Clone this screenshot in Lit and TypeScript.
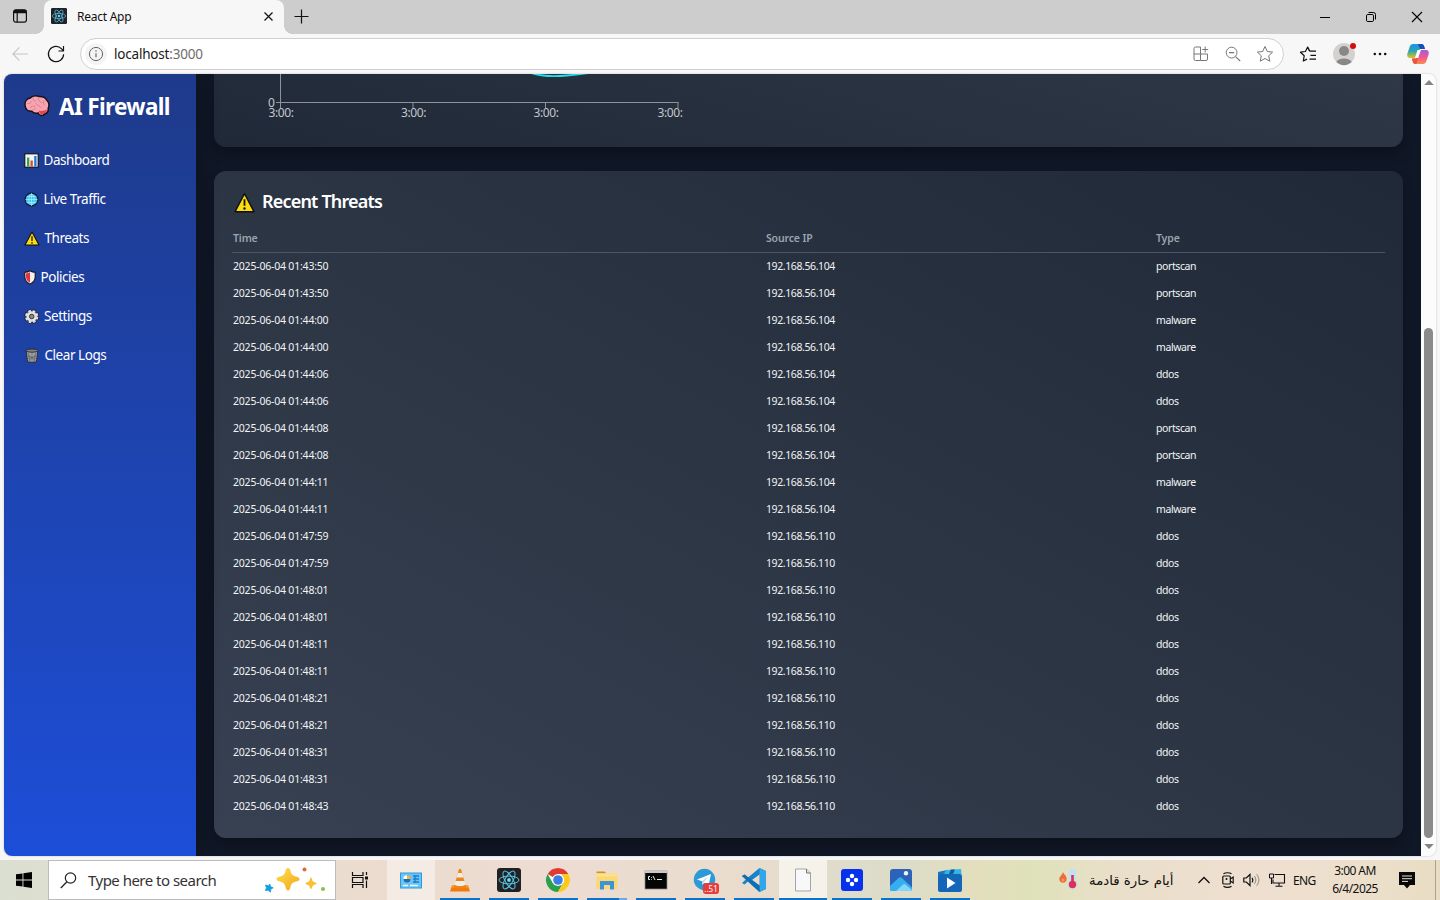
import { LitElement, html, svg, css, nothing } from "lit";
import { customElement } from "lit/decorators.js";

const base = css`
  :host { display: block; box-sizing: border-box; font-family: "Noto Sans", "Open Sans", sans-serif; }
  *, *::before, *::after { box-sizing: border-box; }
  svg { display: block; flex: none; overflow: visible; }
`;

const icon = (w: number, h: number, body: unknown, vb = `0 0 ${w} ${h}`) =>
  html`<svg width=${w} height=${h} viewBox=${vb} fill="none">${body}</svg>`;

const atom = (bg: string, r: number) => svg`
  <rect width="24" height="24" rx=${r} fill=${bg}/>
  <g stroke="#61dafb" stroke-width="1" opacity=".9">
    <ellipse cx="12" cy="12" rx="10" ry="3.9"/>
    <ellipse cx="12" cy="12" rx="10" ry="3.9" transform="rotate(60 12 12)"/>
    <ellipse cx="12" cy="12" rx="10" ry="3.9" transform="rotate(120 12 12)"/>
  </g><circle cx="12" cy="12" r="1.9" fill="#61dafb"/>`;

/* ---------- window chrome ---------- */

@customElement("browser-tabs")
class BrowserTabs extends LitElement {
  static styles = [base, css`
    :host { height: 34px; background: #cdcdcd; }
    .bar { display: flex; height: 34px; align-items: center; }
    .actions { width: 44px; padding: 0 0 2px 12px; }
    .tab { position: relative; width: 240px; height: 34px; background: #f7f7f7; border-radius: 8px 8px 0 0; display: flex; align-items: center; padding: 0 10px 2px 7px; }
    .tab::before, .tab::after { content: ""; position: absolute; bottom: 0; width: 8px; height: 8px; }
    .tab::before { left: -8px; background: radial-gradient(circle at 0 0, transparent 7.5px, #f7f7f7 8px); }
    .tab::after { right: -8px; background: radial-gradient(circle at 100% 0, transparent 7.5px, #f7f7f7 8px); }
    .title { flex: 1; margin: 0 0 0 10px; font-size: 12px; letter-spacing: -0.25px; color: #111; }
    .plus { margin-left: 10px; margin-bottom: 2px; flex: 1; }
    .ctl { width: 46px; display: flex; justify-content: center; }
  `];
  render() {
    return html`<div class="bar">
      <div class="actions">${icon(16, 16, svg`<rect x="1.6" y="1.8" width="12.8" height="12.4" rx="2.2" stroke="#111" stroke-width="1.2"/><path d="M1.6 5.2V4a2.2 2.2 0 0 1 2.2-2.2h8.4A2.2 2.2 0 0 1 14.4 4v1.2z" fill="#111"/><path d="M5.2 5v9" stroke="#111" stroke-width="1.2"/>`)}</div>
      <div class="tab">${icon(16, 16, atom("#20232a", 2), "0 0 24 24")}
        <span class="title">React App</span>
        ${icon(11, 11, svg`<path d="M1.5 1.5l8 8M9.500 1.5l-8 8" stroke="#111" stroke-width="1.2"/>`)}</div>
      <div class="plus">${icon(15, 15, svg`<path d="M7.500 .5v14M.5 7.500h14" stroke="#111" stroke-width="1.2"/>`)}</div>
      <div class="ctl">${icon(10, 10, svg`<path d="M0 5.5h10" stroke="#000"/>`)}</div>
      <div class="ctl">${icon(10, 10, svg`<rect x=".5" y="2.500" width="7" height="7" rx="1.3" stroke="#000"/><path d="M2.500 .5H7.500a2 2 0 0 1 2 2v5" stroke="#000"/>`)}</div>
      <div class="ctl">${icon(10, 10, svg`<path d="M0 0l10 10M10 0L0 10" stroke="#000" stroke-width="1.1"/>`)}</div>
    </div>`;
  }
}

@customElement("browser-toolbar")
class BrowserToolbar extends LitElement {
  static styles = [base, css`
    :host { height: 40px; background: #f7f7f7; }
    .bar { display: flex; height: 40px; align-items: center; }
    .back { width: 36px; padding-left: 12px; }
    .reload { width: 44px; padding-left: 11px; }
    .address { width: 1204px; height: 32px; border: 1px solid #d0d0d0; border-radius: 16px; background: #fff; display: flex; align-items: center; padding: 0 9px 0 4px; }
    .info { width: 22px; height: 22px; border-radius: 50%; background: #f4f4f4; display: grid; place-items: center; }
    .url { flex: 1; margin-left: 7px; font-size: 13.5px; letter-spacing: -0.2px; color: #1a1a1a; }
    .port { color: #6d6d6d; }
    .tools { display: flex; gap: 14px; }
    .side { flex: 1; display: flex; align-items: center; padding-left: 15px; }
    .menu { margin-left: 17px; }
    .avatar { margin-left: 15px; }
    .copilot { margin-left: 20px; }
  `];
  render() {
    return html`<div class="bar">
      <div class="back">${icon(16, 16, svg`<path d="M16 8H1M7.500 1.300L.9 8l6.600 6.700" stroke="#c6c6c6" stroke-width="1.2"/>`)}</div>
      <div class="reload">${icon(18, 18, svg`<path d="M16.600 9.200A7.600 7.600 0 1 1 14.600 3.900L16.400 5.700M16.500 1v5h-5" stroke="#151515" stroke-width="1.2"/>`)}</div>
      <div class="address">
        <div class="info">${icon(16, 16, svg`<circle cx="8" cy="8" r="6.600" stroke="#666"/><path d="M8 7.200v4" stroke="#666" stroke-width="1.2"/><circle cx="8" cy="5" r=".8" fill="#666"/>`)}</div>
        <span class="url">localhost<span class="port">:3000</span></span>
        <div class="tools">
          ${icon(18, 18, svg`<path d="M8.500 15.500H3.500a1.500 1.500 0 0 1-1.500-1.500V3.500A1.500 1.500 0 0 1 3.500 2H8.500v13.500M2 9h13.500v5a1.500 1.500 0 0 1-1.500 1.500H8.500M13.200 1.500v6M10.200 4.500h6" stroke="#777"/>`)}
          ${icon(18, 18, svg`<circle cx="7.600" cy="7.600" r="5.400" stroke="#777"/><path d="M5 7.600h5.200M11.600 11.600l4.600 4.400" stroke="#777" stroke-width="1.1"/>`)}
          ${icon(18, 18, svg`<path d="M9 1.500l2.300 5 5.300.6-3.900 3.700 1.100 5.400L9 13.500l-4.800 2.700 1.100-5.400L1.400 7.100l5.300-.6z" stroke="#777" stroke-linejoin="round"/>`)}
        </div>
      </div>
      <div class="side">
        ${icon(18, 18, svg`<path d="M10.300 5.700L8.700 2 6.400 6.500 1.500 7.200l3.700 3.600-.9 5.200L8 14.100M8.700 2l2.200 4.200h6.100M11.500 10.300H17M10.500 14.200H17" stroke="#111" stroke-width="1.2" stroke-linejoin="round"/>`)}
        <div class="avatar">${icon(24, 24, svg`<circle cx="12" cy="12" r="11" fill="#d4d2d0"/><circle cx="12" cy="9" r="5" fill="#8a8886"/><path d="M4.300 20a8.200 5.500 0 0 1 15.400 0A11 11 0 0 1 4.300 20z" fill="#8a8886"/><circle cx="21" cy="4" r="3" fill="#d40d12"/>`)}</div>
        <div class="menu">${icon(14, 4, svg`<circle cx="1.800" cy="2" r="1.300" fill="#111"/><circle cx="7" cy="2" r="1.300" fill="#111"/><circle cx="12.200" cy="2" r="1.300" fill="#111"/>`)}</div>
        <div class="copilot">${icon(22, 22, svg`
          <defs>
            <linearGradient id="ca" x1="0" y1="0" x2="0" y2="1"><stop offset="0" stop-color="#1c93e8"/><stop offset=".5" stop-color="#2aa6b0"/><stop offset="1" stop-color="#e2c51c"/></linearGradient>
            <linearGradient id="cb" x1="0" y1="0" x2="0" y2="1"><stop offset="0" stop-color="#a45be6"/><stop offset=".5" stop-color="#f0588c"/><stop offset="1" stop-color="#fb8a50"/></linearGradient>
          </defs>
          <path d="M6 1h8.500c1.600 0 2.300 1.200 2.700 2.600L18 6h-5L9 15H3.500C.6 15-.3 13 .4 10.500L2.800 3.400C3.300 2 4.400 1 6 1z" fill="url(#ca)"/>
          <path d="M11 1h3.500c1.600 0 2.300 1.200 2.700 2.600L18 6h-5z" fill="#164fb8"/>
          <path d="M16 21H8.500c-2 0-2.600-1.600-2.900-3L5 15.500h4L13 7h5.500c2.900 0 3.800 2 3.100 4.500l-2.400 7.100C18.700 20 17.600 21 16 21z" fill="url(#cb)"/>
          <path d="M5 15.500h4l2.200-4-1.200 7.500c-.3 1.300-.8 2-1.500 2-2 0-2.600-1.600-2.900-3z" fill="#e8553a"/>
          <path d="M10.500 7h3.400l-2.700 8H7.900z" fill="#fff"/>`)}</div>
      </div>
    </div>`;
  }
}

/* ---------- page icons ---------- */

const warning = (s: number) => icon(s, s, svg`<path d="M8 1.200L15.200 15H.8z" fill="#fcdc10" stroke="#111" stroke-width="1.1" stroke-linejoin="round"/><path d="M8 5.500v5" stroke="#111" stroke-width="1.400"/><circle cx="8" cy="12.600" r=".9" fill="#111"/>`, "0 0 16 16");

const brain = icon(26, 22, svg`
  <path d="M1 10C.7 5.800 3.700 3.500 6.200 3 8.500.5 12.500.4 15 1.400c3.600-.2 6.700 1.300 7.800 3.900 2.200 2 2.600 5.300 1.500 7.700.3 3-1.400 5.400-3.700 6-2 2.400-5.300 2.100-6.500-1.100-3 .6-5.200.1-6.300-1.700C3.700 16.500 1.300 14 1 10z" fill="#f8a3b0" stroke="#15131c" stroke-width="1.500"/>
  <path d="M14.500 15.500c3 1 6.500.5 8.300-1.200.2 2-1 3.700-2.600 4-1.800 2-4.400 1.500-5.700-2.800z" fill="#e8434f"/>
  <path d="M4 8.500c2 .5 3-.5 3-2M9 3.500c0 2 1.500 3 3 2.500M14.500 3c0 3 1 4 3 4.300M20 6c-1 1-1 3 .3 4M6 13c1-2 3.500-2.500 5-1.500M12 8.500c1.500 3 4 2 5 4M9 14.800c1 0 2-.5 2.500-1.500" stroke="#d98090" stroke-width="1" stroke-linecap="round"/>`);

const navIcons: Record<string, unknown> = {
  Dashboard: icon(15, 15, svg`<rect x=".8" y=".8" width="13.400" height="13.400" fill="#f4f4f4" stroke="#111" stroke-width="1.100"/><path d="M3 4.500h2.300v9H3z" fill="#2ba84a"/><path d="M6.500 7.500h2.300v6H6.500z" fill="#e5472f"/><path d="M10.200 3h2.300v10.500h-2.300z" fill="#1f7ad6"/>`),
  "Live Traffic": icon(15, 15, svg`<circle cx="7.500" cy="7.500" r="6.400" fill="#35c5ee" stroke="#0d1c33" stroke-width="1.200"/><path d="M7.500 1.500v12M1.500 7.500h12M2.700 4.500h9.600M2.700 10.500h9.600M7.500 1.500C4 4 4 11 7.500 13.500M7.500 1.500C11 4 11 11 7.500 13.500" stroke="#c4f1ff" stroke-width=".6"/>`),
  Threats: icon(16, 15, svg`<path d="M8 1L15 14H1z" fill="#fcdc10" stroke="#111" stroke-width="1.1" stroke-linejoin="round"/><path d="M8 5.200v4.800" stroke="#111" stroke-width="1.300"/><circle cx="8" cy="11.900" r=".8" fill="#111"/>`),
  Policies: icon(12, 15, svg`<path d="M6 .8c1.500 1 3.200 1.500 5.200 1.500v4.500c0 3.500-2 5.800-5.200 7.400C2.800 12.600.8 10.300.8 6.800V2.300C2.800 2.300 4.500 1.800 6 .8z" fill="#f2f2f2" stroke="#17151c" stroke-width="1.100"/><path d="M6 2.300v10.500C3.500 11.400 2 9.500 2 6.800V3.400C3.500 3.300 4.800 3 6 2.300z" fill="#e2333f"/>`),
  Settings: icon(15.5, 15, svg`<circle cx="7.700" cy="7.500" r="5.700" stroke="#15151c" stroke-width="3.400" stroke-dasharray="3.200 1.277"/><circle cx="7.700" cy="7.500" r="5.500" fill="#e2e2e2" stroke="#222" stroke-width=".4"/><circle cx="7.700" cy="7.500" r="5.700" stroke="#e2e2e2" stroke-width="2" stroke-dasharray="2.600 1.877" stroke-dashoffset="-.3"/><circle cx="7.700" cy="7.500" r="2.300" fill="#888" stroke="#222" stroke-width=".8"/>`),
  "Clear Logs": icon(16, 15, svg`<path d="M2.200 3.200l1.400 10.400c1.300 1 7.500 1 8.800 0l1.400-10.400z" fill="#a0a4a9" stroke="#25272b" stroke-width=".9"/><path d="M4.500 5L6 14M8 5v9M11.500 5L10 14M3 8l10 3M13 8L3 11M3.500 6l8 7M12.500 6l-8 7" stroke="#5c6066" stroke-width=".6"/><ellipse cx="8" cy="2.600" rx="6.300" ry="1.600" fill="#7c8087" stroke="#25272b" stroke-width=".9"/>`),
};

@customElement("side-nav")
class SideNav extends LitElement {
  static styles = [base, css`
    :host { width: 192px; background: linear-gradient(180deg, #1e3a8a, #1d4ed8); padding: 18px 18px 0 20px; color: #fff; box-shadow: 0 0 20px rgba(0, 0, 0, .3); }
    .brand { display: flex; align-items: center; height: 28px; font-size: 22.5px; font-weight: 700; letter-spacing: -0.65px; gap: 9px; white-space: nowrap; }
    .nav { display: flex; flex-direction: column; margin-top: 20.500px; }
    .item { display: flex; align-items: center; height: 39px; margin-left: -0.5px; font-size: 13.5px; letter-spacing: -0.45px; gap: 5px; white-space: nowrap; }
  `];
  render() {
    return html`<div class="brand">${brain}<span>AI Firewall</span></div>
      <div class="nav">${Object.keys(navIcons).map(n => html`<div class="item">${navIcons[n]}<span>${n}</span></div>`)}</div>`;
  }
}

const threats: [string, string, string][] = [
  ["01:43:50", "104", "portscan"], ["01:43:50", "104", "portscan"],
  ["01:44:00", "104", "malware"], ["01:44:00", "104", "malware"],
  ["01:44:06", "104", "ddos"], ["01:44:06", "104", "ddos"],
  ["01:44:08", "104", "portscan"], ["01:44:08", "104", "portscan"],
  ["01:44:11", "104", "malware"], ["01:44:11", "104", "malware"],
  ["01:47:59", "110", "ddos"], ["01:47:59", "110", "ddos"],
  ["01:48:01", "110", "ddos"], ["01:48:01", "110", "ddos"],
  ["01:48:11", "110", "ddos"], ["01:48:11", "110", "ddos"],
  ["01:48:21", "110", "ddos"], ["01:48:21", "110", "ddos"],
  ["01:48:31", "110", "ddos"], ["01:48:31", "110", "ddos"],
  ["01:48:43", "110", "ddos"],
];

@customElement("threat-page")
class ThreatPage extends LitElement {
  static styles = [base, css`
    :host { flex: 1; background: #101726; padding: 0 18px 18px; display: flex; flex-direction: column; gap: 24px; }
    .card { border-radius: 12px; box-shadow: 0 8px 14px -2px rgba(0, 0, 0, .3); }
    .chart { height: 73px; border-radius: 0 0 12px 12px; background: linear-gradient(to top right, #1f2937, #374151) bottom / 100% 330px no-repeat; overflow: hidden; }
    .tick { font: 12px "Noto Sans", sans-serif; fill: #c3c7cd; letter-spacing: -0.4px; }
    .list { flex: 1; background: linear-gradient(to top right, #374151, #1f2937); padding: 16px 18px 18px; }
    .head { display: flex; align-items: center; height: 27px; gap: 7px; padding-left: 2px; font-size: 18px; font-weight: 600; letter-spacing: -0.82px; color: #fff; }
    .head svg { margin-top: 3px; }
    .row { display: grid; grid-template-columns: 533px 390px 1fr; height: 27px; align-items: center; padding-left: 1px; font-size: 10.5px; letter-spacing: -0.2px; color: #f3f4f6; }
    .ip { letter-spacing: -0.4px; }
    .kind { letter-spacing: -0.4px; }
    .labels { margin-top: 10px; padding-bottom: 1px; border-bottom: 1px solid #4b5563; color: #9ca3af; font-weight: 600; letter-spacing: -0.15px; height: 29px; }
    .body { margin-top: -1px; }
  `];
  render() {
    const ticks = [66.500, 199, 331.500, 464];
    return html`
      <div class="card chart">${icon(1189, 73, svg`
        <path d="M315 -2Q332 6 377 -1.500" stroke="#22dcec" stroke-width="2"/>
        <path d="M66.500 0V34M62 28.500H464.500" stroke="#8d939b"/>
        ${ticks.map(x => svg`<path d=${`M${x} 28v6`} stroke="#8d939b"/>`)}
        <text class="tick" x="54" y="33">0</text>
        ${[67, 199.5, 332, 456].map(x => svg`<text class="tick" text-anchor="middle" x=${x} y="43">3:00:</text>`)}`)}</div>
      <div class="card list">
        <div class="head">${warning(21)}<span>Recent Threats</span></div>
        <div class="row labels"><span>Time</span><span>Source IP</span><span>Type</span></div>
        <div class="body">${threats.map(([t, ip, kind]) => html`<div class="row"><span>2025-06-04 ${t}</span><span class="ip">192.168.56.${ip}</span><span class="kind">${kind}</span></div>`)}</div>
      </div>`;
  }
}

@customElement("page-scrollbar")
class PageScrollbar extends LitElement {
  static styles = [base, css`
    :host { width: 15px; background: #fcfcfc; display: flex; flex-direction: column; align-items: center; padding: 6px 0 7px; }
    .thumb { width: 9px; height: 510px; border-radius: 5px; background: #8b8b8b; margin: auto 0 6px; }
  `];
  render() {
    return html`${icon(10, 5, svg`<path d="M5 0l4.800 5H.2z" fill="#858585"/>`)}
      <div class="thumb"></div>${icon(10, 5, svg`<path d="M5 5L.2 0h9.600z" fill="#858585"/>`)}`;
  }
}

/* ---------- taskbar ---------- */

const apps: { art: unknown; state: string }[] = [
  { state: "lit", art: svg`<rect x="1.500" y="5" width="21" height="15" fill="#6cc4f2" stroke="#2b9ae0"/><circle cx="8" cy="11" r="3.700" fill="#fff"/><path d="M8 11V7.300A3.700 3.700 0 1 1 4.300 11z" fill="#1670bd"/><path d="M8 11V7.300A3.700 3.700 0 0 1 11.700 11z" fill="#f4b63c"/><path d="M14 8h6M14 11h6M14 14h6M16 7v8" stroke="#1b7fd0" stroke-width="1.300"/><path d="M4 17.500h5M11 17.500h8" stroke="#eaf7ff" stroke-width="1.500"/>` },
  { state: "run", art: svg`<path d="M4 17.500h16l2 6H2z" fill="#f07b0c"/><path d="M4 17.500h16l.7 2H3.300z" fill="#f99a2c"/><path d="M11 1h2l5 18c-2 2-10 2-12 0z" fill="#f08414"/><path d="M9.900 5h4.200l1.300 4.500H8.600zM7.500 13h9l1 3.800c-2.200 1.600-8.800 1.600-11 0z" fill="#eee"/>` },
  { state: "run", art: atom("#1f2124", 3) },
  { state: "run", art: svg`<circle cx="12" cy="12" r="12" fill="#fff"/><path d="M12 12L1.600 6A12 12 0 0 1 22.400 6H12z" fill="#e13a2e"/><path d="M1.600 6A12 12 0 0 0 12 24l5.200-9L12 12l-5.200 3z" fill="#2da04e"/><path d="M22.400 6A12 12 0 0 1 12 24l5.200-9A6 6 0 0 0 17 9l-2-3z" fill="#fcc921"/><circle cx="12" cy="12" r="6" fill="#fff"/><circle cx="12" cy="12" r="4.800" fill="#3c7de8"/>` },
  { state: "split", art: svg`<path d="M1.500 3.500h8l2 2h-10z" fill="#cf9324"/><path d="M1.500 5.500H22.500V21H1.500z" fill="#fbd871"/><path d="M1.500 5.500h21v3h-21z" fill="#fde190"/><path d="M5 13h14v8.500h-4v-4.500H9v4.500H5z" fill="#3f94d6"/>` },
  { state: "run", art: svg`<rect x="1" y="3" width="22" height="18" fill="#050505" stroke="#888" stroke-width=".7"/><path d="M1 3h22v2H1z" fill="#c9c9c9"/><path d="M6 8.500H4.500v3H6M7.500 9v.7M7.500 11v.7M9 8l2 4M13 11.500h5" stroke="#eee" stroke-width="1"/>` },
  { state: "chat", art: svg`<circle cx="11.500" cy="11.500" r="10.700" fill="#2a9bd6"/><path d="M4 11.500l14-5.500-2.500 12-4.200-3-2 1.800-.3-3.600z" fill="#fff"/><path d="M9 13.200L15.500 8l-4.800 6.500-1.400 2z" fill="#b9dcee"/>` },
  { state: "run", art: svg`<path d="M17.500 0L24 3v18l-6.500 3L6 13.500 2.500 16.500 0 15l3.800-3.500L0 8l2.500-1.500L6 9.500z" fill="#1684c9"/><path d="M17.500 0L24 3v18l-6.500 3z" fill="#35a5ea"/><path d="M17.500 6.500V17.500L10 12z" fill="#ebdcd2"/><path d="M2.500 6.500L17.500 17.500V24L0 8z" fill="#0f6fb3"/>` },
  { state: "open", art: svg`<path d="M4.500 1h11l4 4v18h-15z" fill="#f8f8f8" stroke="#a5a5a5"/><path d="M15.500 1v4h4" fill="#ddd" stroke="#777"/>` },
  { state: "run", art: svg`<rect x="1" y="1" width="22" height="22" rx="3" fill="#0632ec"/><g fill="#fff"><circle cx="12" cy="8" r="2.200"/><circle cx="12" cy="16" r="2.200"/><circle cx="8" cy="12" r="2.200"/><circle cx="16" cy="12" r="2.200"/></g>` },
  { state: "run", art: svg`<rect x="1" y="1" width="22" height="22" rx="3" fill="#2c62b8"/><path d="M1 22V18L9.500 10a2.500 2.500 0 0 1 3.500 0L23 19.500V21a2 2 0 0 1-2 2H2z" fill="#35aef0"/><path d="M7 23l7-6.500a2 2 0 0 1 2.500 0L23 22l-2 1z" fill="#83d6fb"/><circle cx="17" cy="5.300" r="2.200" fill="#eef6ff"/>` },
  { state: "run", art: svg`<path d="M0 4l9-2 2 5H0z" fill="#1b77bd"/><path d="M8 2l15-1 .5 5H6z" fill="#34b4e4"/><path d="M13 1.600h4l-2 4.400h-4z" fill="#0d5ba0"/><rect x="0" y="6" width="24" height="18" rx="2" fill="#1467b8"/><path d="M9 9.500l8.500 5.500L9 20.500z" fill="#fff"/>` },
];

@customElement("task-bar")
class TaskBar extends LitElement {
  static styles = [base, css`
    :host { height: 40px; color: #111; background: linear-gradient(90deg, #dbdfd1 0, #e4dfcd 12%, #ecdccf 27%, #ecdcd2 40%, #e9dccd 52%, #dedccb 59%, #dcdcc8 63%, #e3dfbd 68%, #dfe2ba 72%, #e9dfc9 77%, #efdfd1 87%, #ecdfca 96%, #e9dcc4); }
    .bar { display: flex; height: 40px; align-items: center; }
    .start { width: 48px; display: grid; place-items: center; }
    .search { width: 288px; height: 40px; background: #fff; border: 1px solid #bcbcbc; display: flex; align-items: center; padding: 0 9px 0 11px; font-size: 15px; letter-spacing: -0.52px; color: #333; }
    .hint { flex: 1; margin-left: 11px; white-space: nowrap; }
    .view { width: 51px; padding-left: 15px; }
    .apps { display: flex; gap: 1px; }
    .app { position: relative; width: 48px; height: 40px; display: grid; place-items: center; }
    .app::after { content: ""; position: absolute; left: 4px; right: 4px; bottom: 0; height: 2px; background: #0c73c8; }
    .lit { background: #f4ebe5; }
    .lit::after { display: none; }
    .open { background: #f5f2e9; }
    .open::after { left: 0; right: 0; }
    .split::after { background: linear-gradient(90deg, #0c73c8 32px, #71a9dc 32px); }
    .badge { position: absolute; left: 22px; top: 23px; width: 16px; height: 11px; border-radius: 3px; background: #e63c3c; color: #fff; font-size: 8px; line-height: 11px; text-align: center; }
    .weather { margin-left: auto; display: flex; align-items: center; gap: 11px; width: 115px; font: 13.3px "DejaVu Sans", sans-serif; white-space: nowrap; }
    .tray { display: flex; align-items: center; margin-left: 24px; gap: 9px; }
    .meet { margin-left: 3px; }
    .lang { font-size: 12px; width: 24px; letter-spacing: -0.6px; margin-left: -1px; }
    .clock { width: 66px; margin-left: 5px; text-align: center; font-size: 12px; line-height: 18px; letter-spacing: -0.55px; white-space: nowrap; }
    .note { width: 47px; padding-left: 11px; }
    .edge { width: 5px; height: 40px; border-left: 1px solid #aaa493; }
  `];
  render() {
    return html`<div class="bar">
      <div class="start">${icon(16, 16, svg`<path d="M0 2.300L6.500 1.400V7.600H0zM7.400 1.300L16 0v7.600H7.400zM0 8.400h6.500v6.200L0 13.700zM7.400 8.400H16V16l-8.600-1.300z" fill="#000"/>`)}</div>
      <div class="search">${icon(17, 17, svg`<circle cx="10.500" cy="6" r="5.200" stroke="#222" stroke-width="1.200"/><path d="M6.700 10L.8 16" stroke="#222" stroke-width="1.300"/>`)}
        <span class="hint">Type here to search</span>
        ${icon(62, 26, svg`<defs><linearGradient id="sp" x1="0" y1="0" x2="1" y2="1"><stop offset="0" stop-color="#ffdc4a"/><stop offset="1" stop-color="#f2a91c"/></linearGradient></defs>
          <path d="M24 1c1.500 0 2 1 2.500 3 .8 3.500 2 4.600 5.500 5.500 2 .5 3.500 1 3.500 2.500s-1.500 2-3.500 2.600c-3.500 1-4.700 2-5.500 5.400-.5 2-1 3.500-2.500 3.500s-2-1.500-2.500-3.500c-.8-3.400-2-4.400-5.500-5.400-2-.6-3.500-1.100-3.500-2.600s1.500-2 3.500-2.500c3.500-.9 4.700-2 5.500-5.500C22 2 22.500 1 24 1z" fill="url(#sp)"/>
          <path d="M47 10.500c1 0 1 3 2 4s3.700 1 3.700 2-2.700 1-3.700 2-1 3.500-2 3.500-1-2.500-2-3.500-3.700-1-3.700-2 2.700-1 3.700-2 1-4 2-4z" fill="#fbc02d"/>
          <path d="M5.800 17l.7 2.600 2.700 1.200-2.300 1.500-.6 2.900-2-1.900-3 .1 1.200-2.600L1.400 18l3 .8z" fill="#169fe0" stroke="#169fe0" stroke-width=".8" stroke-linejoin="round"/>
          <circle cx="40.500" cy="2.500" r="2" fill="#e2663a"/><circle cx="59" cy="22" r="2" fill="#8cbd4a"/>`)}
      </div>
      <div class="view">${icon(18, 16, svg`<path d="M1.500 0v3.500H12V0M1.500 16V12.500H12V16M1.500 5.500H12v5H1.500zM15.500 0v3M15.500 8.500V16" stroke="#111" stroke-width="1.200"/><path d="M14 4.500h3v3h-3z" fill="#111"/>`)}</div>
      <div class="apps">${apps.map(a => html`<div class="app ${a.state}">${icon(24, 24, a.art)}${a.state === "chat" ? html`<span class="badge">..51</span>` : nothing}</div>`)}</div>
      <div class="weather">${icon(19, 22, svg`<path d="M4 3c.5 2.300 3.700 3.500 3.700 6.700 0 2.600-1.700 4-3.700 4S.3 12.300.3 10C.3 7.500 3.500 6 4 3z" fill="#ee6b3b"/><circle cx="4" cy="11" r="1.500" fill="#f9a04a"/><rect x="10" y="0" width="7" height="16" rx="3.500" fill="#bfe0f5"/><circle cx="13.500" cy="15.500" r="5" fill="#bfe0f5"/><circle cx="13.500" cy="15.500" r="3.700" fill="#dc3152"/><path d="M13.500 6v9" stroke="#dc3152" stroke-width="2.600"/>`)}<span dir="rtl">أيام حارة قادمة</span></div>
      <div class="tray">
        ${icon(12, 8, svg`<path d="M.5 7L6 1.500 11.500 7" stroke="#111" stroke-width="1.300"/>`)}
        <div class="meet">${icon(12, 16, svg`<rect x=".8" y="4" width="7.500" height="8" rx="1" stroke="#111" stroke-width="1.200"/><path d="M8.300 7l2.900-2v6L8.300 9M1.500 1.800c2-1.500 6-1.500 8 0M1.500 14.200c2 1.500 6 1.500 8 0" stroke="#111" stroke-width="1.100"/><circle cx="4.500" cy="7" r="1" fill="#111"/>`)}</div>
        ${icon(17, 14, svg`<path d="M.8 5h2.500L7 1.500v11L3.300 9H.8z" stroke="#111" stroke-width="1.200"/><path d="M9 4.800c1 1.300 1 3.200 0 4.500" stroke="#111" stroke-width="1.100"/><path d="M11.300 3c2 2.500 2 5.500 0 8M13.600 1.200c3 3.800 3 7.800 0 11.600" stroke="#8d8a84"/>`)}
        ${icon(16, 14, svg`<path d="M5.500 1.500H15.500v8.500H4V6.500M10 10v3M6.500 13.300h7M2.500 5v6" stroke="#111" stroke-width="1.100"/><path d="M.5 1h4v4h-4z" stroke="#111"/>`)}
        <span class="lang">ENG</span>
      </div>
      <div class="clock"><div>3:00 AM</div><div>6/4/2025</div></div>
      <div class="note">${icon(16, 17, svg`<path d="M0 0h16v13h-5l-3 3.500L5 13H0z" fill="#080808"/><path d="M3 4h10M3 6.700h10M3 9.400h6" stroke="#e9dfce" stroke-width="1"/>`)}</div>
      <div class="edge"></div>
    </div>`;
  }
}

@customElement("app-root")
class AppRoot extends LitElement {
  static styles = [base, css`
    :host { width: 1440px; height: 900px; overflow: hidden; background: #f7f7f7; display: flex; flex-direction: column; }
    .page { flex: 1; display: flex; margin: 0 4px 4px; min-height: 0; overflow: hidden; border-radius: 8px; box-shadow: 0 0 2px rgba(0, 0, 0, .25); }
    side-nav { z-index: 1; position: relative; }
  `];
  render() {
    return html`<browser-tabs></browser-tabs><browser-toolbar></browser-toolbar>
      <div class="page"><side-nav></side-nav><threat-page></threat-page><page-scrollbar></page-scrollbar></div>
      <task-bar></task-bar>`;
  }
}
